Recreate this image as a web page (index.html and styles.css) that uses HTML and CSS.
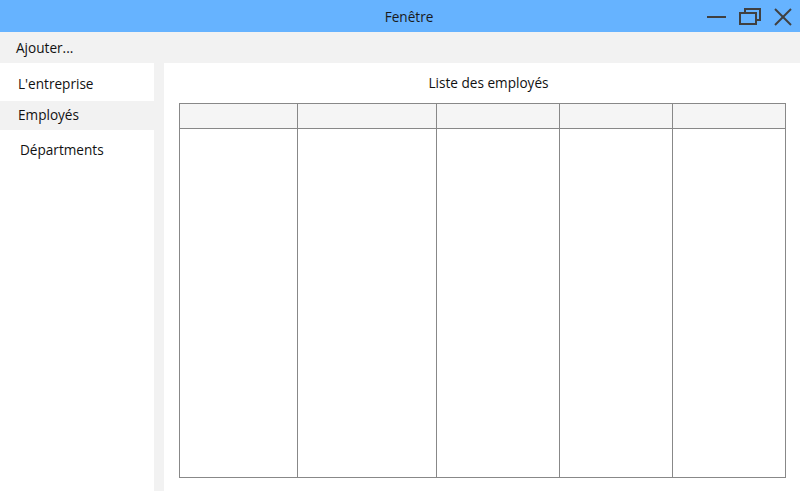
FILE: index.html
```html
<!DOCTYPE html>
<html lang="fr">
<head>
<meta charset="utf-8">
<title>Fenêtre</title>
<link rel="stylesheet" href="styles.css">
</head>
<body>
<div class="window">
  <header class="titlebar">
    <span class="title">Fenêtre</span>
    <svg class="controls" width="100" height="32" viewBox="0 0 100 32" aria-hidden="true">
      <g fill="none" stroke="#404040" stroke-width="2">
        <line x1="7" y1="17" x2="26" y2="17"/>
        <rect x="40" y="13" width="16" height="11"/>
        <polyline points="45,12 45,9 60,9 60,20 57,20"/>
        <line x1="75" y1="9" x2="91" y2="25"/>
        <line x1="91" y1="9" x2="75" y2="25"/>
      </g>
    </svg>
  </header>
  <nav class="menubar"><span class="menu-item">Ajouter...</span></nav>
  <div class="content">
    <aside class="sidebar">
      <div class="side-item first">L'entreprise</div>
      <div class="side-item selected">Employés</div>
      <div class="side-item last">Départments</div>
    </aside>
    <main class="main">
      <div class="main-title">Liste des employés</div>
      <div class="grid">
        <div class="cell head c1"></div>
        <div class="cell head c2"></div>
        <div class="cell head c3"></div>
        <div class="cell head c4"></div>
        <div class="cell head c5"></div>
        <div class="cell body c1"></div>
        <div class="cell body c2"></div>
        <div class="cell body c3"></div>
        <div class="cell body c4"></div>
        <div class="cell body c5"></div>
      </div>
    </main>
  </div>
</div>
</body>
</html>
```

FILE: styles.css
```css
* { box-sizing: border-box; }
html, body { margin: 0; padding: 0; }
body {
  font-family: "Open Sans", "Noto Sans", sans-serif;
  font-size: 13.6px;
  color: #111;
  background: #f2f2f2;
}
.window {
  width: 800px;
  height: 491px;
  display: flex;
  flex-direction: column;
  overflow: hidden;
}
.titlebar {
  position: relative;
  height: 32px;
  flex: none;
  background: #66b3ff;
  display: flex;
  align-items: center;
  justify-content: center;
  padding-left: 18px;
}
.title { color: #1a1a1a; }
.controls { position: absolute; top: 0; right: 0; }
.menubar {
  height: 31px;
  flex: none;
  background: #f2f2f2;
  display: flex;
  align-items: center;
  padding-left: 16px;
  padding-bottom: 1px;
}
.content {
  flex: 1;
  display: flex;
  gap: 10px;
  background: #f2f2f2;
}
.sidebar {
  width: 154px;
  flex: none;
  background: #fff;
}
.side-item {
  line-height: 18px;
  padding-left: 18px;
}
.side-item.first { padding-top: 12px; padding-bottom: 8px; }
.side-item.selected { background: #f2f2f2; padding-top: 5px; padding-bottom: 6px; }
.side-item.last { padding-top: 11px; padding-left: 20px; }
.main {
  flex: 1;
  background: #fff;
  padding: 0 14px 13px 15px;
  display: flex;
  flex-direction: column;
}
.main-title {
  height: 40px;
  line-height: 18px;
  padding-top: 11px;
  padding-left: 12px;
  text-align: center;
}
.grid {
  flex: 1;
  display: grid;
  grid-template-columns: 118px 139px 123px 113px 113px;
  grid-template-rows: 25px 1fr;
  border-left: 1px solid #888;
  border-top: 1px solid #888;
}
.cell {
  border-right: 1px solid #888;
  border-bottom: 1px solid #888;
}
.cell.head { background: #f5f5f5; }
.cell.body { background: #fff; }
```
